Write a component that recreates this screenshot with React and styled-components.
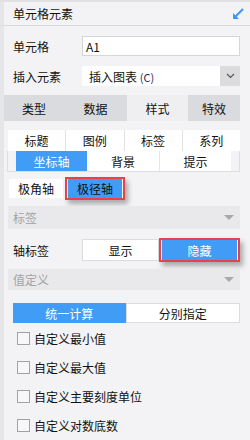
import React from "react";
import styled, { createGlobalStyle } from "styled-components";

const Global = createGlobalStyle`
  html, body { margin: 0; padding: 0; background: #f3f3f5; }
  body { font-family: "Noto Sans CJK SC", "Noto Sans", sans-serif; font-size: 12px; color: #111; }
  * { box-sizing: border-box; }
`;

const Page = styled.div`
  width: 250px;
  height: 440px;
  overflow: hidden;
  background: #f3f3f5;
  border-top: 2px solid #e1e1e3;
  display: flex;
  flex-direction: column;
`;

const Header = styled.div`
  height: 27px;
  border-bottom: 1px solid #d9d9db;
  border-left: 4px solid #e6e6e8;
  padding: 0 6px 0 9px;
  display: flex;
  align-items: center;
  justify-content: space-between;
  font-size: 12px;
`;

const Body = styled.div`
  flex: 1;
  border-left: 4px solid #e6e6e8;
  width: 240px;
  display: flex;
  flex-direction: column;
`;

const FormRow = styled.div`
  display: flex;
  align-items: center;
  height: 20px;
  margin-top: ${(p) => p.$top}px;
  padding-left: 9px;
`;

const Label = styled.div`
  width: 69px;
  flex: none;
`;

const Input = styled.div`
  flex: 1;
  height: 20px;
  background: #fff;
  border: 1px solid #d6d6d8;
  padding-left: 3px;
  display: flex;
  align-items: center;
`;

const Select = styled.div`
  flex: 1;
  height: 20px;
  background: #fff;
  display: flex;
  align-items: center;
  padding-left: 7px;
`;

const SelectText = styled.div`
  flex: 1;
  small { font-size: 11px; color: #2a2a55; }
`;

const SelectBtn = styled.div`
  width: 20px;
  height: 20px;
  background: #dcdcdf;
  display: flex;
  align-items: center;
  justify-content: center;
`;

const Tabs = styled.div`
  display: grid;
  grid-template-columns: 60px 63px 61px 52px;
  margin-top: 9px;
  height: 26px;
`;

const Tab = styled.div`
  background: ${(p) => (p.$active ? "#efeff1" : "#dadbde")};
  display: flex;
  align-items: center;
  justify-content: center;
  font-size: 12px;
`;

const SubRow1 = styled.div`
  margin: 9px 0 0 4px;
  display: grid;
  grid-template-columns: repeat(4, 1fr);
  gap: 1px;
  height: 21px;
  background: #e2e2e4;
`;

const SubRow2 = styled.div`
  margin-left: 3px;
  height: 21px;
  border: 1px solid #dedee0;
  border-top: none;
  padding: 0 8px;
  display: grid;
  grid-template-columns: 71px 72px 72px;
  gap: 0;
`;

const Cell = styled.div`
  background: ${(p) => (p.$active ? "#409cf5" : "#fff")};
  color: ${(p) => (p.$active ? (p.$dark ? "#111" : "#fff") : "#111")};
  display: flex;
  align-items: center;
  justify-content: center;
  border-left: ${(p) => (p.$sep ? "1px solid #e6e6e8" : "none")};
`;

const AxisRow = styled.div`
  display: flex;
  align-items: center;
  margin: 4px 0 0 5px;
  height: 24px;
  gap: 2px;
`;

const AxisBtn = styled(Cell)`
  width: 54px;
  height: 19px;
`;

const Highlight = styled.div`
  border: 2px solid #e8414b;
  padding: 0 1px;
  box-shadow: 3px 4px 5px rgba(0, 0, 0, 0.3);
  display: flex;
`;

const SectionHead = styled.div`
  margin: ${(p) => p.$top}px 0 0 4px;
  height: ${(p) => p.$h}px;
  background: #e9e9eb;
  color: #a3a3a5;
  display: flex;
  align-items: center;
  justify-content: space-between;
  padding: 0 6px 0 5px;
`;

const Tri = styled.div`
  width: 0;
  height: 0;
  border-left: 5px solid transparent;
  border-right: 5px solid transparent;
  border-top: 5px solid #a9a9ab;
`;

const ToggleRow = styled.div`
  display: flex;
  align-items: center;
  margin-top: 10px;
  padding-left: 9px;
  height: 22px;
`;

const Seg = styled.div`
  display: flex;
  flex: 1;
  height: 22px;
`;

const SegBtn = styled.div`
  flex: 1;
  display: flex;
  align-items: center;
  justify-content: center;
  background: ${(p) => (p.$active ? "#409cf5" : "#fff")};
  color: ${(p) => (p.$active ? "#fff" : "#111")};
  border: ${(p) => (p.$active ? "none" : "1px solid #dcdcde")};
`;

const HighlightSeg = styled.div`
  flex: 1;
  display: flex;
  border: 2px solid #e8414b;
  padding: 0 1px 0 1px;
  margin: -1px 0;
  box-shadow: 3px 4px 5px rgba(0, 0, 0, 0.3);
`;

const CalcSeg = styled.div`
  display: flex;
  margin: 13px 0 0 9px;
  height: 20px;
`;

const CheckList = styled.div`
  display: flex;
  flex-direction: column;
  padding-left: 13px;
  margin-top: 1px;
`;

const CheckRow = styled.label`
  display: flex;
  align-items: center;
  height: 29px;
  gap: 4px;
`;

const Box = styled.span`
  width: 13px;
  height: 13px;
  border: 1px solid #a2a2a4;
  background: #f7f7f9;
`;

const ArrowIcon = () => (
  <svg width="12" height="12" viewBox="0 0 12 12">
    <line x1="11" y1="1" x2="3" y2="9" stroke="#3e9af4" strokeWidth="2.2" />
    <polygon points="1,5 1,11 7,11" fill="#3e9af4" />
  </svg>
);

const Chevron = () => (
  <svg width="9" height="6" viewBox="0 0 9 6">
    <polyline points="1,1 4.5,4.5 8,1" fill="none" stroke="#555" strokeWidth="1.2" />
  </svg>
);

export default function App() {
  const checks = ["自定义最小值", "自定义最大值", "自定义主要刻度单位", "自定义对数底数"];
  return (
    <>
      <Global />
      <Page>
        <Header>
          <span>单元格元素</span>
          <ArrowIcon />
        </Header>
        <Body>
          <FormRow $top={10}>
            <Label>单元格</Label>
            <Input>A1</Input>
          </FormRow>
          <FormRow $top={10}>
            <Label>插入元素</Label>
            <Select>
              <SelectText>
                插入图表 <small>(C)</small>
              </SelectText>
              <SelectBtn>
                <Chevron />
              </SelectBtn>
            </Select>
          </FormRow>
          <Tabs>
            <Tab>类型</Tab>
            <Tab>数据</Tab>
            <Tab $active>样式</Tab>
            <Tab>特效</Tab>
          </Tabs>
          <SubRow1>
            <Cell>标题</Cell>
            <Cell>图例</Cell>
            <Cell>标签</Cell>
            <Cell>系列</Cell>
          </SubRow1>
          <SubRow2>
            <Cell $active>坐标轴</Cell>
            <Cell>背景</Cell>
            <Cell $sep>提示</Cell>
          </SubRow2>
          <AxisRow>
            <AxisBtn>极角轴</AxisBtn>
            <Highlight>
              <AxisBtn $active $dark>极径轴</AxisBtn>
            </Highlight>
          </AxisRow>
          <SectionHead $top={6} $h={23}>
            <span>标签</span>
            <Tri />
          </SectionHead>
          <ToggleRow>
            <Label>轴标签</Label>
            <Seg>
              <SegBtn>显示</SegBtn>
              <HighlightSeg>
                <SegBtn $active>隐藏</SegBtn>
              </HighlightSeg>
            </Seg>
          </ToggleRow>
          <SectionHead $top={8} $h={21}>
            <span>值定义</span>
            <Tri />
          </SectionHead>
          <CalcSeg>
            <SegBtn $active>统一计算</SegBtn>
            <SegBtn>分别指定</SegBtn>
          </CalcSeg>
          <CheckList>
            {checks.map((c) => (
              <CheckRow key={c}>
                <Box />
                <span>{c}</span>
              </CheckRow>
            ))}
          </CheckList>
        </Body>
      </Page>
    </>
  );
}
